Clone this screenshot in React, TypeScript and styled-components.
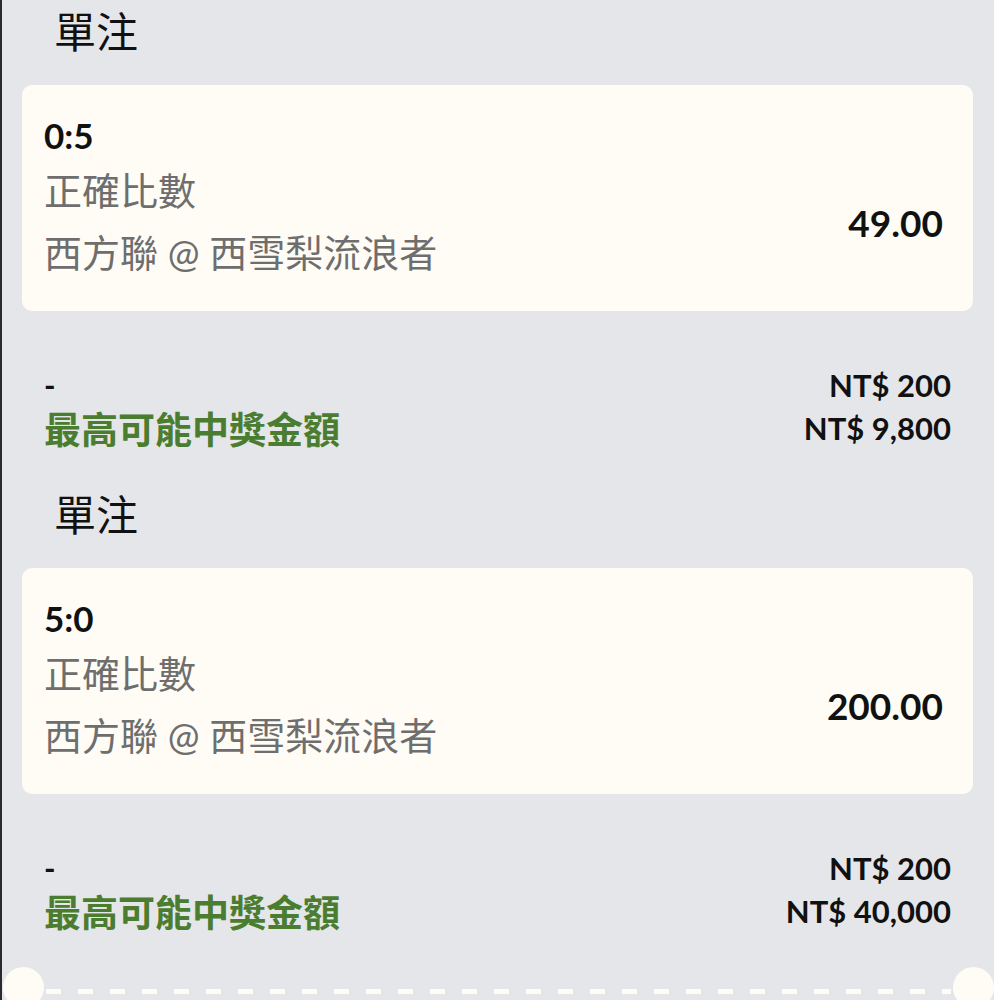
import React from 'react';
import styled, { createGlobalStyle } from 'styled-components';

const GlobalStyle = createGlobalStyle`
  body {
    margin: 0;
    background-color: #e5e6e9;
    font-family: Lato, "Noto Sans CJK TC", sans-serif;
  }
`;

const StyledPage = styled.div`
  height: 1000px;
  overflow: hidden;
  box-sizing: border-box;
  border-left: 2px solid #2a2a2a;
  padding: 0 21px 0 20px;
  background-color: #e5e6e9;
`;

const StyledSection = styled.section`
  display: flex;
  flex-direction: column;
  padding-bottom: 34px;
`;

const StyledTitle = styled.h2`
  margin: 0 0 21px 32px;
  height: 64px;
  line-height: 64px;
  font-size: 42px;
  font-weight: 400;
  color: #111111;
`;

const StyledCard = styled.div`
  box-sizing: border-box;
  height: 226px;
  padding: 25px 30px 0 22px;
  border-radius: 10px;
  background-color: #fefcf5;
`;

const StyledScore = styled.div`
  height: 50px;
  line-height: 50px;
  font-size: 35px;
  font-weight: 700;
  color: #111111;
`;

const StyledCardRow = styled.div`
  display: flex;
  align-items: center;
  justify-content: space-between;
`;

const StyledDetails = styled.div`
  display: flex;
  flex-direction: column;
`;

const StyledDetailLine = styled.div<{ $height: number }>`
  height: ${({ $height }) => $height}px;
  line-height: ${({ $height }) => $height}px;
  font-size: 38px;
  color: #6e6e6e;
`;

const StyledOdds = styled.div`
  font-size: 37px;
  font-weight: 700;
  color: #111111;
`;

const StyledSummary = styled.div`
  display: flex;
  flex-direction: column;
  margin-top: 52px;
  padding: 0 22px;
`;

const StyledSummaryRow = styled.div`
  display: flex;
  align-items: center;
  justify-content: space-between;
  height: 43px;
`;

const StyledDash = styled.span`
  font-size: 31px;
  font-weight: 700;
  color: #111111;
`;

const StyledPayoutLabel = styled.span`
  font-size: 37px;
  font-weight: 700;
  color: #4b7d30;
`;

const StyledAmount = styled.span`
  font-size: 31px;
  font-weight: 700;
  color: #111111;
`;

const StyledPerforation = styled.div`
  display: flex;
  align-items: flex-start;
  margin: 1px -21px 0 -19px;
`;

const StyledNotch = styled.div`
  flex: 0 0 41px;
  height: 41px;
  border-radius: 50%;
  background-color: #fefcf5;
`;

const StyledDashedLine = styled.div`
  flex: 1;
  height: 5px;
  margin: 22px 2px 0;
  background-image: repeating-linear-gradient(
    to right,
    #fefcf5 0 15px,
    transparent 15px 32px
  );
`;

interface Bet {
  score: string;
  market: string;
  match: string;
  odds: string;
  stake: string;
  payout: string;
}

const bets: Bet[] = [
  {
    score: '0:5',
    market: '正確比數',
    match: '西方聯 @ 西雪梨流浪者',
    odds: '49.00',
    stake: 'NT$ 200',
    payout: 'NT$ 9,800',
  },
  {
    score: '5:0',
    market: '正確比數',
    match: '西方聯 @ 西雪梨流浪者',
    odds: '200.00',
    stake: 'NT$ 200',
    payout: 'NT$ 40,000',
  },
];

const BetSection: React.FunctionComponent<{ bet: Bet }> = ({ bet }) => (
  <StyledSection>
    <StyledTitle>單注</StyledTitle>
    <StyledCard>
      <StyledScore>{bet.score}</StyledScore>
      <StyledCardRow>
        <StyledDetails>
          <StyledDetailLine $height={60}>{bet.market}</StyledDetailLine>
          <StyledDetailLine $height={64}>{bet.match}</StyledDetailLine>
        </StyledDetails>
        <StyledOdds>{bet.odds}</StyledOdds>
      </StyledCardRow>
    </StyledCard>
    <StyledSummary>
      <StyledSummaryRow>
        <StyledDash>-</StyledDash>
        <StyledAmount>{bet.stake}</StyledAmount>
      </StyledSummaryRow>
      <StyledSummaryRow>
        <StyledPayoutLabel>最高可能中獎金額</StyledPayoutLabel>
        <StyledAmount>{bet.payout}</StyledAmount>
      </StyledSummaryRow>
    </StyledSummary>
  </StyledSection>
);

const App: React.FunctionComponent = () => (
  <>
    <GlobalStyle />
    <StyledPage>
      {bets.map((bet, i) => (
        <BetSection key={i} bet={bet} />
      ))}
      <StyledPerforation>
        <StyledNotch />
        <StyledDashedLine />
        <StyledNotch />
      </StyledPerforation>
    </StyledPage>
  </>
);

export default App;
